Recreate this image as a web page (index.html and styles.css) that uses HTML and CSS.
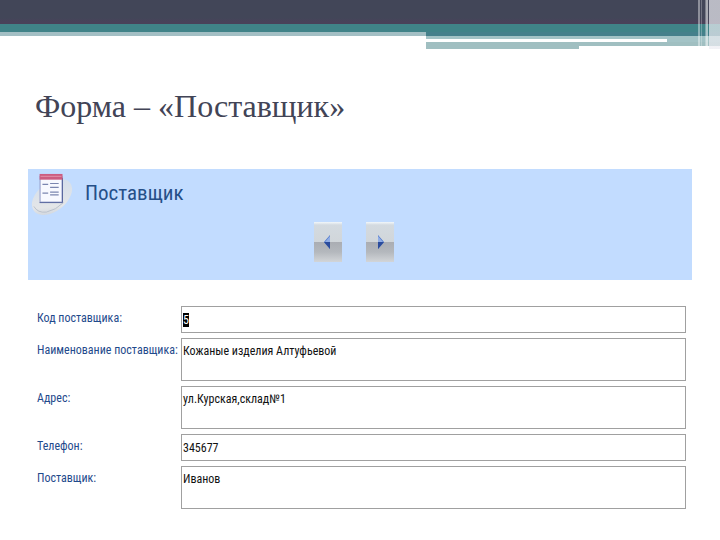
FILE: index.html
```
<!DOCTYPE html>
<html lang="ru">
<head>
<meta charset="utf-8">
<title>Форма – «Поставщик»</title>
<link rel="stylesheet" href="styles.css">
</head>
<body>
<header class="band">
  <div class="band-dark"></div>
  <div class="band-teal"></div>
  <div class="band-steps">
    <div class="step-left"></div>
    <div class="step-right">
      <div class="step-teal"></div>
      <div class="step-pale"></div>
      <div class="step-white"></div>
      <div class="step-mid"></div>
      <div class="step-last"></div>
    </div>
  </div>
  <div class="stripes"></div>
</header>
<main class="slide">
  <h1 class="title">Форма – «Поставщик»</h1>
  <section class="banner">
    <div class="banner-head">
      <svg class="form-icon" viewBox="0 0 44 44" aria-hidden="true">
        <defs>
          <linearGradient id="disc" x1="0" y1="1" x2="1" y2="0">
            <stop offset="0" stop-color="#c3ccd8"/>
            <stop offset=".3" stop-color="#e4e6e8"/>
            <stop offset="1" stop-color="#cfdcec"/>
          </linearGradient>
        </defs>
        <ellipse cx="22" cy="25" rx="24" ry="15" transform="rotate(-38 22 25)" fill="url(#disc)"/>
        <path d="M3 35Q7 42 16 41Q26 39 34 31" fill="none" stroke="#b9c0cc"/>
        <rect x="9.500" y="3.500" width="23" height="27" fill="#f8f9ff" stroke="#8d97c4"/>
        <path d="M9 31H33V5" fill="none" stroke="#56659c"/>
        <rect x="9" y="1" width="24" height="6" fill="#cc5c80"/>
        <path d="M10 3.500H32" stroke="#e293aa"/>
        <path d="M12 12H18M12 21H18M20 11H29M20 15H29M20 20H29M20 23H29" stroke="#7b86b0" stroke-width="1.300"/>
      </svg>
      <h2 class="banner-title">Поставщик</h2>
    </div>
    <div class="nav">
      <button class="nav-button" type="button" aria-label="Предыдущая запись">
        <svg viewBox="0 0 12 16" aria-hidden="true"><path d="M8 1V15L2 8Z" fill="#4f78cc"/><path d="M8 8V15L2 8Z" fill="#2b4c9c"/><path d="M8 2V8H3Z" fill="#91aee6"/></svg>
      </button>
      <button class="nav-button" type="button" aria-label="Следующая запись">
        <svg viewBox="0 0 12 16" aria-hidden="true"><path d="M4 1V15L10 8Z" fill="#4f78cc"/><path d="M4 8V15L10 8Z" fill="#2b4c9c"/><path d="M4 2V8H9Z" fill="#91aee6"/></svg>
      </button>
    </div>
  </section>
  <form class="form">
    <label for="code">Код поставщика:</label>
    <input id="code" class="field" type="text" value="5">
    <label for="name">Наименование поставщика:</label>
    <textarea id="name" class="field tall">Кожаные изделия Алтуфьевой</textarea>
    <label for="address">Адрес:</label>
    <textarea id="address" class="field tall">ул.Курская,склад№1</textarea>
    <label for="phone">Телефон:</label>
    <input id="phone" class="field" type="text" value="345677">
    <label for="contact">Поставщик:</label>
    <textarea id="contact" class="field tall">Иванов</textarea>
  </form>
</main>
<script src="script.js"></script>
</body>
</html>
```
FILE: styles.css
```
* { box-sizing: border-box; }
body {
  margin: 0;
  background: #fff;
  font-family: "Roboto Condensed", Roboto, sans-serif;
}
.band { position: relative; height: 49px; }
.band-dark {
  height: 24px;
  background: linear-gradient(#424658 0 18px, #49425a 22px);
}
.band-teal { height: 8px; background: #408388; }
.band-steps { display: grid; grid-template-columns: 426fr 294fr; }
.step-left {
  height: 4px;
  background: #a3bfc4;
}
.step-teal { height: 4px; background: #45808b; }
.step-pale { height: 3px; background: #a3c3c6; }
.step-white {
  height: 3px;
  width: 82%;
  background: #fff;
  box-shadow: 53px 0 #a3c3c6;
}
.step-mid { height: 4px; background: #a0bfc1; }
.step-last { height: 3px; width: 52%; background: #a0bfc1; }
.stripes {
  position: absolute;
  top: 0;
  right: 0;
  width: 22px;
  height: 49px;
  background: linear-gradient(90deg,
    rgba(255,255,255,.4) 0 2px, transparent 2px 3px,
    rgba(255,255,255,.25) 3px 4px, transparent 4px 7px,
    rgba(255,255,255,.3) 7px 8px, rgba(255,255,255,.55) 8px 10px,
    transparent 10px 11px, rgba(236,236,242,.7) 11px 22px);
}
.slide { padding: 36px 28px 30px; }
.title {
  margin: 0 0 42px;
  padding-left: 7px;
  font: 32px/42px "Liberation Serif", serif;
  color: #424456;
}
.banner { height: 111px; background: #c2dcff; }
.banner-head { display: flex; gap: 12px; padding: 3px 0 0 3px; }
.form-icon { width: 42px; height: 44px; }
.banner-title {
  margin: 0;
  font-size: 21px;
  line-height: 42px;
  font-weight: 400;
  color: #254f88;
}
.nav { display: flex; justify-content: center; gap: 24px; padding: 6px 12px 0 0; }
.nav-button {
  display: flex;
  align-items: center;
  justify-content: center;
  width: 28px;
  height: 40px;
  padding: 0;
  border: 0;
  background: linear-gradient(#f2f7fb 0, #d3dae0 3px, #d1d6da 20px, #aaadb3 20px, #b4b8bd 30px, #d2d5d8 40px);
}
.nav-button svg { width: 12px; height: 16px; }
.form {
  display: grid;
  grid-template-columns: 144px 1fr;
  row-gap: 5px;
  padding: 26px 6px 0 9px;
}
.form label {
  font-size: 12px;
  line-height: 24px;
  color: #1f4a8c;
  white-space: nowrap;
}
.field {
  display: block;
  width: 100%;
  height: 27px;
  margin: 0;
  padding: 1px;
  border: 1px solid #a0a0a0;
  border-radius: 0;
  outline: 0;
  background: #fff;
  font: 12px/22px "Roboto Condensed", Roboto, sans-serif;
  color: #111;
  resize: none;
  overflow: hidden;
}
.tall { height: 43px; }
.field::selection { background: #000; color: #fff; }
```
FILE: script.js
```
const code = document.getElementById("code");
code.focus();
code.select();
```
